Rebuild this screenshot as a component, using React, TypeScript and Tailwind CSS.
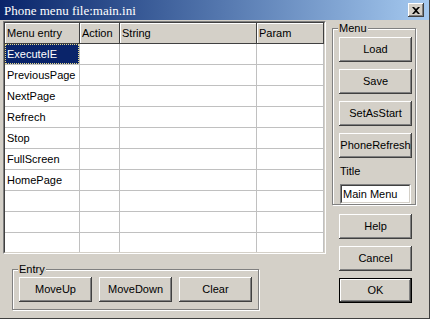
import React from "react";

const raised =
  "shadow-[inset_-1px_-1px_0_#404040,inset_1px_1px_0_#ffffff,inset_-2px_-2px_0_#808080]";

const columns = [
  { title: "Menu entry", width: "w-[75px]" },
  { title: "Action", width: "w-[40px]" },
  { title: "String", width: "w-[137px]" },
  { title: "Param", width: "w-[67px]" },
];

const entries = [
  "ExecuteIE",
  "PreviousPage",
  "NextPage",
  "Refrech",
  "Stop",
  "FullScreen",
  "HomePage",
  "",
  "",
  "",
];

const WinButton: React.FC<{ label: string; isDefault?: boolean; className?: string }> = ({
  label,
  isDefault,
  className = "",
}) => (
  <div className={`${className} h-[25px] ${isDefault ? "border border-black" : ""}`}>
    <div className={`h-full flex items-center justify-center bg-[#d4d0c8] ${raised}`}>
      {label}
    </div>
  </div>
);

const GroupBox: React.FC<{ label: string; className?: string; children: React.ReactNode }> = ({
  label,
  className = "",
  children,
}) => (
  <div className={`relative border border-[#808080] shadow-[1px_1px_0_#ffffff,inset_1px_1px_0_#ffffff] ${className}`}>
    <span className="absolute -top-[8px] left-[5px] px-[1px] bg-[#d4d0c8] leading-[14px]">{label}</span>
    {children}
  </div>
);

const App: React.FC = () => {
  return (
    <div className="w-[430px] h-[319px] bg-[#d4d0c8] flex flex-col overflow-hidden border-r border-b border-[#404040] font-['Liberation_Sans',Arial,sans-serif] text-[11px] text-black">
      {/* Title bar */}
      <div className="h-[20px] shrink-0 flex items-center justify-between pl-[4px] pr-[5px] bg-gradient-to-r from-[#0a246a] to-[#a6caf0]">
        <span className="text-white text-[13px] font-['Liberation_Serif',serif] leading-none">
          Phone menu file:main.ini
        </span>
        <div className={`w-[16px] h-[14px] bg-[#d4d0c8] flex items-center justify-center ${raised}`}>
          <svg width="8" height="7" viewBox="0 0 8 7">
            <path d="M0 0h2l2 2 2-2h2L5 3.5 8 7H6L4 5 2 7H0l3-3.5z" fill="#000" />
          </svg>
        </div>
      </div>

      <div className="flex flex-1">
        {/* Left side */}
        <div className="flex flex-col pl-[3px] pt-[1px]">
          <div className="w-[323px] h-[233px] border border-t-[#808080] border-l-[#808080] border-r-white border-b-white">
            <div className="h-full border border-t-[#404040] border-l-[#404040] border-r-[#d4d0c8] border-b-[#d4d0c8] bg-white overflow-hidden">
              <div className="flex">
                {columns.map((c) => (
                  <div
                    key={c.title}
                    className={`${c.width} shrink-0 h-[21px] flex items-center pl-[2px] bg-[#d4d0c8] shadow-[inset_-1px_-1px_0_#404040,inset_1px_1px_0_#ffffff]`}
                  >
                    {c.title}
                  </div>
                ))}
              </div>
              {entries.map((name, i) => (
                <div key={i} className="flex">
                  {columns.map((c, j) => {
                    const selected = i === 0 && j === 0;
                    return (
                      <div
                        key={c.title}
                        className={`${c.width} shrink-0 h-[21px] border-r border-b border-[#c0c0c0] flex items-center`}
                      >
                        {j === 0 && name && (
                          <div
                            className={
                              selected
                                ? "w-full h-full flex items-center pl-[1px] bg-[#0a246a] text-white border border-dotted border-[#e8dc8c]"
                                : "pl-[2px]"
                            }
                          >
                            {name}
                          </div>
                        )}
                      </div>
                    );
                  })}
                </div>
              ))}
            </div>
          </div>

          <GroupBox label="Entry" className="ml-[9px] mt-[15px] w-[247px] h-[41px]">
            <div className="flex gap-[7px] pl-[6px] pt-[7px]">
              <WinButton label="MoveUp" className="w-[73px]" />
              <WinButton label="MoveDown" className="w-[73px]" />
              <WinButton label="Clear" className="w-[73px]" />
            </div>
          </GroupBox>
        </div>

        {/* Right side */}
        <div className="flex flex-col ml-[6px] pt-[8px]">
          <GroupBox label="Menu" className="w-[84px] h-[177px]">
            <div className="flex flex-col gap-[7px] pl-[6px] pt-[8px]">
              <WinButton label="Load" className="w-[73px]" />
              <WinButton label="Save" className="w-[73px]" />
              <WinButton label="SetAsStart" className="w-[73px]" />
              <WinButton label="PhoneRefresh" className="w-[73px]" />
            </div>
            <div className="pl-[7px] mt-[6px] leading-[14px]">Title</div>
            <div className="ml-[7px] mt-[6px] w-[71px] h-[20px] border border-t-[#808080] border-l-[#808080] border-r-white border-b-white">
              <div className="h-full flex items-center pl-[1px] bg-white border border-t-[#404040] border-l-[#404040] border-r-[#d4d0c8] border-b-[#d4d0c8]">
                Main Menu
              </div>
            </div>
          </GroupBox>
          <div className="flex flex-col gap-[7px] ml-[7px] mt-[9px]">
            <WinButton label="Help" className="w-[73px]" />
            <WinButton label="Cancel" className="w-[73px]" />
            <WinButton label="OK" isDefault className="w-[73px]" />
          </div>
        </div>
      </div>
    </div>
  );
};

export default App;
